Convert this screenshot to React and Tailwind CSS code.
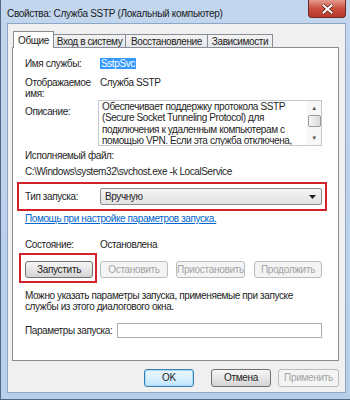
import React from "react";

const font = { fontFamily: '"Liberation Sans", Arial, sans-serif' };

function Btn({ children, className = "", disabled = false, primary = false }) {
  let look = "border-[#707070] bg-gradient-to-b from-[#f6f6f6] via-[#e6e6e6] to-[#d4d4d4] text-[#1e1e1e]";
  if (disabled) look = "border-[#b8bcc0] bg-[#f4f4f4] text-[#a3a3a3]";
  if (primary) look = "border-[#3c7fb1] bg-gradient-to-b from-[#eaf6fd] via-[#d9f0fc] to-[#bee6fd] text-[#1e1e1e] shadow-[inset_0_0_0_1px_#a6dbf8]";
  return (
    <div className={`flex items-center justify-center whitespace-nowrap rounded-[3px] border text-[10px] leading-none tracking-[-0.3px] ${look} ${className}`}>
      {children}
    </div>
  );
}

function Tab({ label, active, className = "" }) {
  if (active) {
    return (
      <div className={`relative z-10 flex h-[17px] items-center justify-center whitespace-nowrap border border-b-0 border-[#898c95] bg-white ${className}`}>
        {label}
      </div>
    );
  }
  return (
    <div className={`mt-[3px] flex h-[14px] items-center justify-center whitespace-nowrap border border-b-0 border-l-0 border-[#898c95] bg-gradient-to-b from-[#f3f3f3] to-[#e3e5e8] ${className}`}>
      {label}
    </div>
  );
}

export default function App() {
  return (
    <div style={font} className="flex h-[400px] w-[350px] flex-col overflow-hidden border-l border-b border-[#50688a] bg-gradient-to-b from-[#c2d6ee] via-[#bdd2ea] to-[#b9cfe8] text-[#1e1e1e]">
      {/* title bar */}
      <div className="flex h-[23px] shrink-0 items-start">
        <div className="ml-[6px] mt-[7px] whitespace-nowrap text-[10px] leading-[13px] tracking-[-0.3px] text-[#1a1a1a]">
          Свойства: Служба SSTP (Локальный компьютер)
        </div>
        <div className="ml-auto mr-[4px] flex h-[18px] w-[38px] items-center justify-center rounded-b-[4px] border border-t-0 border-[#6d2a25] bg-gradient-to-b from-[#e49a8f] via-[#c9503f] to-[#b8382a]">
          <svg width="11" height="10" viewBox="0 0 11 10">
            <path d="M1.5 1.5 L9.5 8.5 M9.5 1.5 L1.5 8.5" stroke="#5a1d16" strokeWidth="3.4" strokeLinecap="square" />
            <path d="M1.5 1.5 L9.5 8.5 M9.5 1.5 L1.5 8.5" stroke="#ffffff" strokeWidth="2" strokeLinecap="square" />
          </svg>
        </div>
      </div>

      {/* client */}
      <div className="mb-[6px] ml-[6px] mr-[4px] flex flex-1 flex-col border border-[#8da6c4] bg-[#f0f0f0] pl-[4px] pr-[6px] pt-[7px] text-[10px] tracking-[-0.4px]">
        <div className="flex h-[17px] items-start">
          <Tab label="Общие" active className="ml-[1px] w-[41px]" />
          <Tab label="Вход в систему" className="w-[72px]" />
          <Tab label="Восстановление" className="w-[82px]" />
          <Tab label="Зависимости" className="w-[65px]" />
        </div>

        <div className="-mt-px flex h-[314px] flex-col whitespace-nowrap border border-[#898c95] bg-white pl-[12px]">
          <div className="mt-[9px] flex h-[12px] items-center">
            <div className="w-[75px]">Имя службы:</div>
            <div className="flex h-[11px] items-center bg-[#3399ff] px-px text-white">SstpSvc</div>
          </div>

          <div className="mt-[8px] flex leading-[11px]">
            <div className="w-[75px]">Отображаемое<br />имя:</div>
            <div>Служба SSTP</div>
          </div>

          <div className="mt-[1px] flex">
            <div className="mt-[4px] w-[73px]">Описание:</div>
            <div className="flex h-[46px] w-[224px] border border-[#c5c7cc] bg-white">
              <div className="flex-1 overflow-hidden pl-[3px] leading-[11.3px]">
                Обеспечивает поддержку протокола SSTP<br />
                (Secure Socket Tunneling Protocol) для<br />
                подключения к удаленным компьютерам с<br />
                помощью VPN. Если эта служба отключена,
              </div>
              <div className="flex w-[14px] shrink-0 flex-col items-center bg-[#f7f7f7]">
                <div className="mt-[4px] text-[6px] leading-[6px] text-[#555]">▲</div>
                <div className="mt-[4px] h-[12px] w-[13px] rounded-[2px] border border-[#9b9b9b] bg-gradient-to-r from-[#f4f4f4] to-[#dcdcdc]"></div>
                <div className="mt-auto mb-[4px] text-[6px] leading-[6px] text-[#555]">▼</div>
              </div>
            </div>
          </div>

          <div className="mt-[4px] h-[12px] leading-[12px]">Исполняемый файл:</div>
          <div className="mt-[4px] h-[12px] leading-[12px]">C:\Windows\system32\svchost.exe -k LocalService</div>

          <div className="-ml-[8px] mt-[4px] flex h-[29px] w-[310px] items-center border-2 border-[#d2232a] pl-[6px] pr-[3px]">
            <div className="w-[75px]">Тип запуска:</div>
            <div className="flex h-[17px] flex-1 items-center rounded-[2px] border border-[#8f8f8f] bg-gradient-to-b from-[#f4f4f4] to-[#e2e2e2] pl-[4px] pr-[5px]">
              <span>Вручную</span>
              <svg className="ml-auto" width="7" height="4" viewBox="0 0 7 4">
                <path d="M0 0 H7 L3.5 4 Z" fill="#1e1e1e" />
              </svg>
            </div>
          </div>

          <div className="mt-[2px] h-[12px] leading-[12px] text-[#0066cc] underline">
            Помощь при настройке параметров запуска.
          </div>

          <div className="mt-[13px] flex h-[12px] items-center">
            <div className="w-[75px]">Состояние:</div>
            <div>Остановлена</div>
          </div>

          <div className="relative mt-[11px] flex h-[17px]">
            <div className="absolute -left-[6px] -top-[8px] h-[30px] w-[78px] border-2 border-[#d2232a]"></div>
            <Btn className="w-[68px]">Запустить</Btn>
            <Btn disabled className="ml-[7px] w-[68px]">Остановить</Btn>
            <Btn disabled className="ml-[8px] w-[69px]">Приостановить</Btn>
            <Btn disabled className="ml-[9px] w-[68px]">Продолжить</Btn>
          </div>

          <div className="mt-[12px] leading-[11px]">
            Можно указать параметры запуска, применяемые при запуске<br />
            службы из этого диалогового окна.
          </div>

          <div className="mt-[11px] flex h-[15px] items-center">
            <div className="w-[92px]">Параметры запуска:</div>
            <div className="h-[15px] w-[205px] border border-[#abadb3] bg-white"></div>
          </div>
        </div>

        <div className="mt-[8px] flex h-[18px] justify-end">
          <Btn primary className="w-[50px]">OK</Btn>
          <Btn className="ml-[17px] w-[60px]">Отмена</Btn>
          <Btn disabled className="ml-[7px] w-[61px]">Применить</Btn>
        </div>
      </div>
    </div>
  );
}
